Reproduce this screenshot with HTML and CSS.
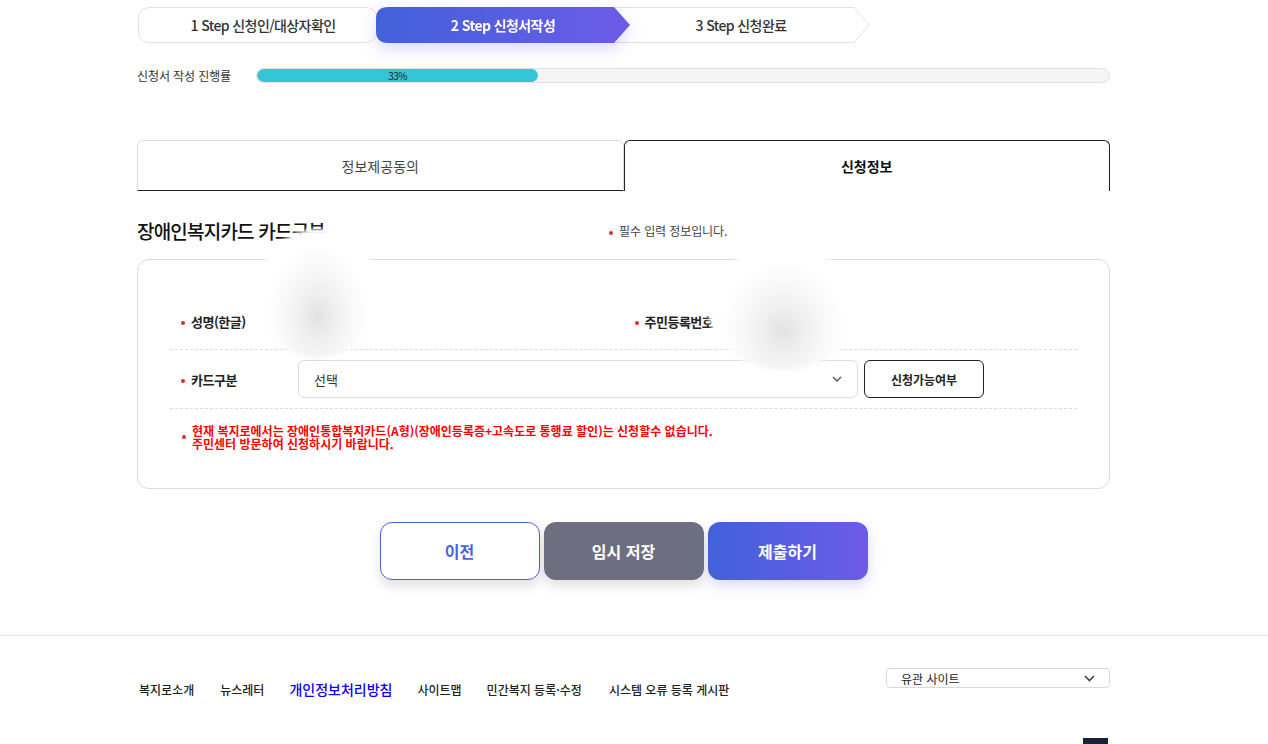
FILE: index.html
```html
<!DOCTYPE html>
<html lang="ko">

<head>
    <meta charset="UTF-8">
    <meta name="viewport" content="width=device-width, initial-scale=1.0">
    <title>신청서작성</title>
    <link rel="stylesheet" href="styles.css">
</head>

<body>
    <div class="container">
        <ol class="steps">
            <li class="step step1">
                <svg class="step-bg" viewBox="0 0 242 36" preserveAspectRatio="none">
                    <path d="M12 .5H228Q236 .5 240 10L241.5 18 240 26Q236 35.5 228 35.5H12Q.5 35.5 .5 24V12Q.5 .5 12 .5Z" fill="#fff" stroke="#e2e2e2"/>
                </svg>
                <span>1 Step 신청인/대상자확인</span>
            </li>
            <li class="step step2">
                <svg class="step-bg" viewBox="0 0 254 36" preserveAspectRatio="none">
                    <defs>
                        <linearGradient id="g2" x1="0" x2="1" y1="0" y2="0">
                            <stop offset="0" stop-color="#4261d9"/>
                            <stop offset="1" stop-color="#6c5be8"/>
                        </linearGradient>
                    </defs>
                    <path d="M12 0H238L254 18 238 36H12Q0 36 0 24V12Q0 0 12 0Z" fill="url(#g2)"/>
                </svg>
                <span>2 Step 신청서작성</span>
            </li>
            <li class="step step3">
                <svg class="step-bg" viewBox="0 0 258 36" preserveAspectRatio="none">
                    <path d="M.5 .5H242L257 18 242 35.5H.5Z" fill="#fff" stroke="#e2e2e2"/>
                </svg>
                <span>3 Step 신청완료</span>
            </li>
        </ol>

        <div class="progress">
            <span class="progress-label">신청서 작성 진행률</span>
            <div class="progress-track">
                <div class="progress-fill" style="width: 33%">33%</div>
            </div>
        </div>

        <div class="tabs">
            <div class="tab">정보제공동의</div>
            <div class="tab active">신청정보</div>
        </div>

        <div class="section-head">
            <h2>장애인복지카드 카드구분</h2>
            <p class="required"><i class="dot"></i>필수 입력 정보입니다.</p>
        </div>

        <div class="card">
            <div class="row row-split">
                <div class="field">
                    <label><i class="dot"></i>성명(한글)</label>
                </div>
                <div class="field">
                    <label><i class="dot"></i>주민등록번호</label>
                </div>
            </div>
            <div class="row">
                <label><i class="dot"></i>카드구분</label>
                <div class="select">
                    <span>선택</span>
                    <svg width="10" height="6" viewBox="0 0 10 6"><path d="M1 1l4 4 4-4" fill="none" stroke="#555" stroke-width="1.4"/></svg>
                </div>
                <button class="btn-check">신청가능여부</button>
            </div>
            <div class="notice">
                <i class="dot"></i>
                <p>현재 복지로에서는 장애인통합복지카드(A형)(장애인등록증+고속도로 통행료 할인)는 신청할수 없습니다.<br>주민센터 방문하여 신청하시기 바랍니다.</p>
            </div>
            <div class="blur blur1"></div>
            <div class="blur blur2"></div>
        </div>

        <div class="actions">
            <button class="btn btn-prev">이전</button>
            <button class="btn btn-save">임시 저장</button>
            <button class="btn btn-submit">제출하기</button>
        </div>
    </div>

    <footer>
        <div class="footer-inner">
            <ul class="footer-links">
                <li>복지로소개</li>
                <li>뉴스레터</li>
                <li class="privacy">개인정보처리방침</li>
                <li>사이트맵</li>
                <li>민간복지 등록·수정</li>
                <li>시스템 오류 등록 게시판</li>
            </ul>
            <div class="family-site">
                <span>유관 사이트</span>
                <svg width="11" height="7" viewBox="0 0 11 7"><path d="M1 1l4.5 4.5L10 1" fill="none" stroke="#444" stroke-width="1.6"/></svg>
            </div>
        </div>
        <div class="footer-mark"></div>
    </footer>
</body>

</html>
```

FILE: styles.css
```css
* {
    margin: 0;
    padding: 0;
    box-sizing: border-box;
}

body {
    width: 1268px;
    font-family: "Noto Sans CJK KR", "Noto Sans", sans-serif;
    color: #222;
    background: #fff;
    overflow: hidden;
}

ol,
ul {
    list-style: none;
}

.container {
    width: 973px;
    margin-left: 137px;
    padding-top: 7px;
}

.dot {
    display: inline-block;
    width: 4px;
    height: 4px;
    border-radius: 50%;
    background: #e0292b;
    margin-right: 6px;
    vertical-align: middle;
}

/* steps */
.steps {
    display: flex;
    height: 36px;
}

.step {
    position: relative;
    display: flex;
    justify-content: center;
    align-items: center;
    font-size: 14px;
    font-weight: 500;
    letter-spacing: -0.6px;
    color: #333;
}

.step span {
    position: relative;
}

.step-bg {
    position: absolute;
    left: 0;
    top: 0;
    width: 100%;
    height: 100%;
}

.step1 {
    width: 242px;
    margin-left: 1px;
    z-index: 1;
}

.step1 span {
    left: 4px;
}

.step2 {
    width: 254px;
    margin-left: -4px;
    z-index: 3;
    color: #fff;
    font-weight: 700;
    filter: drop-shadow(0 6px 8px rgba(90, 90, 230, 0.22));
}

.step3 {
    width: 258px;
    margin-left: -18px;
    z-index: 2;
}

/* progress */
.progress {
    display: flex;
    align-items: center;
    margin-top: 24px;
    height: 16px;
}

.progress-label {
    width: 119px;
    font-size: 12px;
    letter-spacing: -0.1px;
    color: #333;
}

.progress-track {
    flex: 1;
    height: 15px;
    background: #f5f5f5;
    border: 1px solid #e0e0e0;
    border-radius: 8px;
    overflow: hidden;
}

.progress-fill {
    height: 100%;
    background: #33c6d6;
    border-radius: 8px;
    font-size: 10px;
    line-height: 13px;
    text-align: center;
    color: #222;
    letter-spacing: -0.5px;
}

/* tabs */
.tabs {
    display: flex;
    margin-top: 57px;
    height: 51px;
}

.tab {
    flex: 1;
    display: flex;
    justify-content: center;
    align-items: center;
    font-size: 14px;
    color: #444;
    border: 1px solid #ddd;
    border-bottom: 1px solid #222;
    border-radius: 6px 6px 0 0;
}

.tab.active {
    border: 1px solid #222;
    border-bottom: none;
    font-weight: 700;
    color: #111;
}

/* section */
.section-head {
    display: flex;
    align-items: flex-end;
    margin-top: 25px;
    height: 28px;
}

.section-head h2 {
    width: 472px;
    font-size: 19px;
    font-weight: 500;
    letter-spacing: -0.8px;
    color: #111;
}

.required {
    font-size: 12px;
    color: #444;
    padding-bottom: 5px;
    letter-spacing: -0.1px;
}

.card {
    position: relative;
    margin-top: 15px;
    height: 230px;
    border: 1px solid #dcdcdc;
    border-radius: 12px;
    padding: 33px 32px 0;
}

.row {
    display: flex;
    align-items: center;
    height: 59px;
    border-bottom: 1px dashed #dcdcdc;
}

.row label {
    width: 128px;
    padding-left: 11px;
    font-size: 13px;
    font-weight: 700;
    color: #222;
    letter-spacing: -0.5px;
}

.row-split {
    height: 57px;
    padding-bottom: 3px;
}

.row-split .field {
    flex: 1;
}

.select {
    display: flex;
    justify-content: space-between;
    align-items: center;
    width: 560px;
    height: 38px;
    padding: 0 15px;
    border: 1px solid #dcdcdc;
    border-radius: 6px;
    font-size: 13px;
    color: #333;
}

.btn-check {
    width: 120px;
    height: 38px;
    margin-left: 6px;
    background: #fff;
    border: 1px solid #222;
    border-radius: 6px;
    font-family: inherit;
    font-size: 12px;
    font-weight: 700;
    color: #222;
}

.notice {
    display: flex;
    align-items: center;
    padding: 15px 0 0 12px;
}

.notice p {
    font-size: 12px;
    font-weight: 700;
    line-height: 13px;
    color: #ff0000;
    letter-spacing: 0;
}

.blur {
    position: absolute;
    border-radius: 50%;
    background: radial-gradient(ellipse at 50% 68%, #e2e2e2 0, #eeeeee 18%, #f8f8f8 38%, #fff 58%);
    filter: blur(2px);
}

.blur1 {
    left: 118px;
    top: -31px;
    width: 123px;
    height: 129px;
}

.blur2 {
    left: 570px;
    top: -14px;
    width: 150px;
    height: 124px;
}

/* buttons */
.actions {
    display: flex;
    justify-content: center;
    gap: 4px;
    margin-top: 33px;
}

.btn {
    width: 160px;
    height: 58px;
    border-radius: 12px;
    font-family: inherit;
    font-size: 16px;
    font-weight: 700;
    border: none;
    box-shadow: 0 6px 12px rgba(0, 0, 0, 0.12);
}

.btn-prev {
    background: #fff;
    border: 1px solid #4a63dc;
    color: #4a63dc;
}

.btn-save {
    background: #6d6f80;
    color: #fff;
}

.btn-submit {
    background: linear-gradient(90deg, #4261d9, #6c5be8);
    color: #fff;
    box-shadow: 0 6px 14px rgba(100, 90, 230, 0.22);
}

/* footer */
footer {
    position: relative;
    margin-top: 55px;
    height: 109px;
    border-top: 1px solid #e2e2e2;
}

.footer-inner {
    display: flex;
    justify-content: space-between;
    width: 973px;
    margin-left: 137px;
    padding-top: 32px;
}

.footer-links {
    display: flex;
    align-items: baseline;
    gap: 25px;
    padding: 11px 0 0 2px;
    font-size: 12px;
    font-weight: 500;
    color: #222;
    letter-spacing: 0;
}

.footer-links li:first-child {
    margin-right: 1px;
}

.footer-links .privacy {
    font-size: 14px;
    color: #0b00f5;
}

.footer-links li:last-child {
    margin-left: 2px;
}

.family-site {
    display: flex;
    justify-content: space-between;
    align-items: center;
    width: 224px;
    height: 20px;
    padding: 0 14px;
    border: 1px solid #d8d8d8;
    border-radius: 4px;
    font-size: 12px;
    color: #222;
}

.footer-mark {
    position: absolute;
    left: 1083px;
    top: 102px;
    width: 25px;
    height: 10px;
    background: #1b2235;
}
```
